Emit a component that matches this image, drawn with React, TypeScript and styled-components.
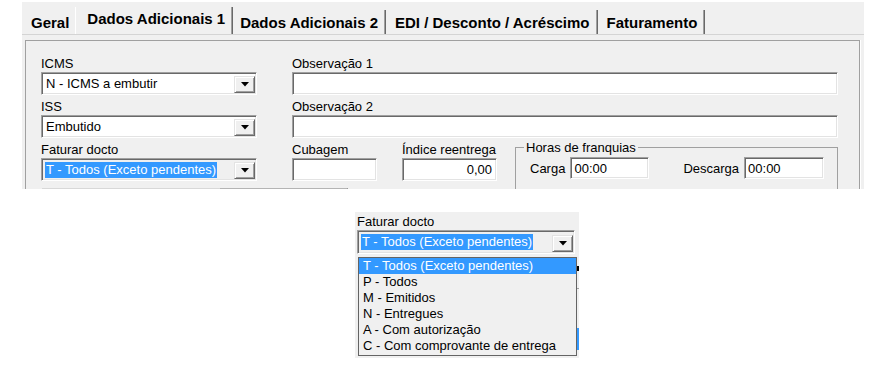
import styled, { createGlobalStyle } from "styled-components";

const GlobalStyle = createGlobalStyle`
  body {
    margin: 0;
    background: #fff;
    font-family: "Liberation Sans", Arial, sans-serif;
    font-size: 13px;
    color: #000;
  }
  * {
    box-sizing: border-box;
  }
`;

const Caret = () => (
  <svg width="8" height="5" viewBox="0 0 8 5">
    <path d="M0 0h8L4 4.5z" fill="#000" />
  </svg>
);

type ComboProps = { value: string; width: number; height?: number; selected?: boolean };

const Combo: React.FC<ComboProps> = ({ value, width, height = 23, selected }) => (
  <ComboBox $width={width} $height={height} $selected={selected}>
    <ComboText $selected={selected}>{value}</ComboText>
    <DropButton>
      <Caret />
    </DropButton>
  </ComboBox>
);

type FieldProps = { label: string; width?: number; trail?: number; children: React.ReactNode };

const Field: React.FC<FieldProps> = ({ label, width, trail = 0, children }) => (
  <FieldWrapper $width={width} $trail={trail}>
    <Label>{label}</Label>
    {children}
  </FieldWrapper>
);

const options = [
  "T - Todos (Exceto pendentes)",
  "P - Todos",
  "M - Emitidos",
  "N - Entregues",
  "A - Com autorização",
  "C - Com comprovante de entrega",
];

const tabs = ["Geral", "Dados Adicionais 1", "Dados Adicionais 2", "EDI / Desconto / Acréscimo", "Faturamento"];

export default function App() {
  return (
    <Page>
      <GlobalStyle />
      <Window>
        <TabBar>
          {tabs.map((t, i) => (
            <Tab key={t} $active={i === 1}>
              {t}
            </Tab>
          ))}
        </TabBar>
        <Sheet>
          <Frame>
            <LeftColumn>
              <Field label="ICMS">
                <Combo value="N - ICMS a embutir" width={216} />
              </Field>
              <Field label="ISS">
                <Combo value="Embutido" width={216} />
              </Field>
              <Field label="Faturar docto">
                <Combo value="T - Todos (Exceto pendentes)" width={216} selected />
              </Field>
              <CutRow>
                <Stub $width={178} />
                <Stub $width={128} $dark />
              </CutRow>
            </LeftColumn>
            <RightColumn>
              <Field label="Observação 1">
                <TextInput />
              </Field>
              <Field label="Observação 2">
                <TextInput />
              </Field>
              <BottomRow>
                <Field label="Cubagem" width={85} trail={25}>
                  <TextInput />
                </Field>
                <Field label="Índice reentrega" width={95} trail={18}>
                  <TextInput $align="right">0,00</TextInput>
                </Field>
                <GroupBox>
                  <Legend>Horas de franquias</Legend>
                  <GroupRow>
                    <InlineField>
                      <span>Carga</span>
                      <TextInput $width={79} $height={22}>
                        00:00
                      </TextInput>
                    </InlineField>
                    <InlineField>
                      <span>Descarga</span>
                      <TextInput $width={80} $height={22}>
                        00:00
                      </TextInput>
                    </InlineField>
                  </GroupRow>
                </GroupBox>
              </BottomRow>
            </RightColumn>
          </Frame>
        </Sheet>
      </Window>

      <Snippet>
        <Label>Faturar docto</Label>
        <Combo value="T - Todos (Exceto pendentes)" width={218} height={24} selected />
        <ListRow>
          <DropList>
            {options.map((o, i) => (
              <Option key={o} $active={i === 0}>
                {o}
              </Option>
            ))}
          </DropList>
          <Peek />
        </ListRow>
      </Snippet>
    </Page>
  );
}

const Page = styled.div`
  display: flex;
  flex-direction: column;
  align-items: flex-start;
  padding-top: 2px;
`;

const Window = styled.div`
  margin-left: 22px;
  width: 842px;
  height: 187px;
  background: #f0f0f0;
  overflow: hidden;
  display: flex;
  flex-direction: column;
`;

const TabBar = styled.div`
  display: flex;
  align-items: flex-end;
  height: 32px;
  flex-shrink: 0;
`;

const Tab = styled.div<{ $active?: boolean }>`
  position: relative;
  height: ${(p) => (p.$active ? 27 : 24)}px;
  line-height: ${(p) => (p.$active ? 24 : 25)}px;
  padding: 0 7px 0 9px;
  font-size: 15px;
  font-weight: bold;
  white-space: nowrap;
  background: #f0f0f0;
  border-right: 1px solid #696969;
  box-shadow: inset -1px 0 0 #a0a0a0;

  ${(p) =>
    p.$active &&
    `
    z-index: 1;
    margin: 0 -2px 0 -2px;
    padding-left: 11px;
    border-left: 1px solid #fff;
  `}
`;

const Sheet = styled.div`
  flex: 1;
  border-top: 1px solid #d4d4d4;
  padding: 5px 4px 0 3px;
`;

const Frame = styled.div`
  display: flex;
  gap: 35px;
  height: 200px;
  padding: 15px 23px 0 15px;
  border: 1px solid #a0a0a0;
  border-bottom: none;
  box-shadow: 1px 0 0 #fff;
`;

const LeftColumn = styled.div`
  display: flex;
  flex-direction: column;
  gap: 4px;
  width: 216px;
  flex-shrink: 0;
`;

const RightColumn = styled.div`
  display: flex;
  flex-direction: column;
  gap: 4px;
  flex: 1;
`;

const FieldWrapper = styled.div<{ $width?: number; $trail: number }>`
  display: flex;
  flex-direction: column;
  width: ${(p) => (p.$width ? `${p.$width}px` : "auto")};
  margin-right: ${(p) => p.$trail}px;
  flex-shrink: 0;
`;

const Label = styled.div`
  height: 16px;
  line-height: 16px;
  white-space: nowrap;
`;

const sunken = `
  background: #fff;
  border: 1px solid;
  border-color: #a0a0a0 #fff #fff #a0a0a0;
  box-shadow: inset 1px 1px 0 #696969, inset -1px -1px 0 #e3e3e3;
`;

const TextInput = styled.div<{ $width?: number; $height?: number; $align?: string }>`
  ${sunken}
  width: ${(p) => (p.$width ? `${p.$width}px` : "100%")};
  height: ${(p) => p.$height ?? 23}px;
  padding: 0 4px 0 3px;
  display: flex;
  align-items: center;
  justify-content: ${(p) => (p.$align === "right" ? "flex-end" : "flex-start")};
  white-space: nowrap;
`;

const ComboBox = styled.div<{ $width: number; $height: number; $selected?: boolean }>`
  ${sunken}
  background: ${(p) => (p.$selected ? "#f0f0f0" : "#fff")};
  width: ${(p) => p.$width}px;
  height: ${(p) => p.$height}px;
  display: flex;
  align-items: center;
  justify-content: space-between;
  padding: 1px 1px 1px 3px;
`;

const ComboText = styled.span<{ $selected?: boolean }>`
  line-height: 16px;
  padding: 0 1px;
  white-space: nowrap;
  background: ${(p) => (p.$selected ? "#3399ff" : "transparent")};
  color: ${(p) => (p.$selected ? "#fff" : "#000")};
`;

const DropButton = styled.div`
  width: 21px;
  height: 17px;
  margin-top: 2px;
  display: flex;
  align-items: center;
  justify-content: center;
  background: #f0f0f0;
  border: 1px solid;
  border-color: #e3e3e3 #696969 #696969 #e3e3e3;
  box-shadow: inset 1px 1px 0 #fff, inset -1px -1px 0 #a0a0a0;
`;

const CutRow = styled.div`
  display: flex;
  margin: 3px 0 0 1px;
  width: 306px;
`;

const Stub = styled.div<{ $width: number; $dark?: boolean }>`
  width: ${(p) => p.$width}px;
  height: 10px;
  border-top: 1px solid ${(p) => (p.$dark ? "#b4b4b4" : "#d8d8d8")};
  border-right: ${(p) => (p.$dark ? "1px solid #808080" : "none")};
`;

const BottomRow = styled.div`
  display: flex;
  align-items: flex-start;
`;

const GroupBox = styled.fieldset`
  flex: 1;
  margin: 0;
  padding: 4px 13px 20px 14px;
  border: 1px solid #a0a0a0;
  min-width: 0;
`;

const Legend = styled.legend`
  margin-left: -6px;
  padding: 0 2px;
  line-height: 11px;
  font-size: 13px;
`;

const GroupRow = styled.div`
  display: flex;
  gap: 34px;
`;

const InlineField = styled.label`
  display: flex;
  align-items: center;
  gap: 5px;
`;

const Snippet = styled.div`
  margin: 23px 0 0 355px;
  width: 224px;
  height: 146px;
  background: #f0f0f0;
  padding: 2px 0 0 2px;
  display: flex;
  flex-direction: column;
`;

const ListRow = styled.div`
  display: flex;
  margin-top: 3px;
  margin-left: 1px;
`;

const DropList = styled.div`
  width: 219px;
  border: 1px solid #646464;
  background: #f0f0f0;
  padding-bottom: 1px;
`;

const Option = styled.div<{ $active?: boolean }>`
  height: 16px;
  line-height: 16px;
  padding-left: 4px;
  white-space: nowrap;
  background: ${(p) => (p.$active ? "#3399ff" : "transparent")};
  color: ${(p) => (p.$active ? "#fff" : "#000")};
`;

const Peek = styled.div`
  width: 2px;
  background: linear-gradient(
    to bottom,
    transparent 9px,
    #000 9px,
    #000 14px,
    transparent 14px,
    transparent 31px,
    #a0a0a0 31px,
    #a0a0a0 32px,
    transparent 32px,
    transparent 71px,
    #3399ff 71px,
    #3399ff 93px,
    transparent 93px
  );
`;
